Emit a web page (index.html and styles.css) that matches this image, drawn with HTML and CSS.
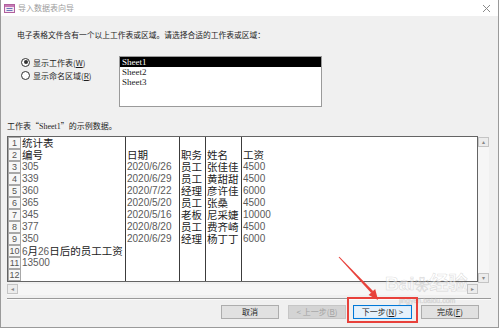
FILE: index.html
```html
<!DOCTYPE html>
<html lang="zh-CN">
<head>
    <meta charset="UTF-8">
    <meta name="viewport" content="width=device-width, initial-scale=1.0">
    <title>导入数据表向导</title>
    <link rel="stylesheet" href="styles.css">
</head>
<body>
    <div class="window">
        <div class="titlebar">
            <svg class="app-icon" width="11" height="9" viewBox="0 0 11 9">
                <rect x="0.5" y="0.5" width="10" height="8" fill="#f4e8f2" stroke="#b0609e"/>
                <rect x="1" y="1" width="9" height="2" fill="#c879b4"/>
                <line x1="2.5" y1="4.5" x2="8.5" y2="4.5" stroke="#6b78b8"/>
                <line x1="2.5" y1="6.5" x2="8.5" y2="6.5" stroke="#6b78b8"/>
            </svg>
            <span class="title">导入数据表向导</span>
            <svg class="close" width="9" height="9" viewBox="0 0 9 9">
                <path d="M1 1 L8 8 M8 1 L1 8" stroke="#8a8a8a" stroke-width="1"/>
            </svg>
        </div>

        <div class="panel">
            <p class="intro">电子表格文件含有一个以上工作表或区域。请选择合适的工作表或区域：</p>

            <div class="choose">
                <div class="radios">
                    <div class="radio-row"><span class="radio checked"></span>显示工作表(<u>W</u>)</div>
                    <div class="radio-row"><span class="radio"></span>显示命名区域(<u>R</u>)</div>
                </div>
                <div class="listbox">
                    <div class="item selected">Sheet1</div>
                    <div class="item">Sheet2</div>
                    <div class="item">Sheet3</div>
                </div>
            </div>

            <p class="caption">工作表“<span class="latin">Sheet1</span>”的示例数据。</p>

            <div class="grid-area">
                <div class="sheet">
                    <div class="col rownums">
                        <div class="num">1</div><div class="num">2</div><div class="num">3</div>
                        <div class="num">4</div><div class="num">5</div><div class="num">6</div>
                        <div class="num">7</div><div class="num">8</div><div class="num">9</div>
                        <div class="num">10</div><div class="num">11</div><div class="num">12</div>
                    </div>
                    <div class="col col-a">
                        <div class="cell">统计表</div>
                        <div class="cell">编号</div>
                        <div class="cell n">305</div>
                        <div class="cell n">339</div>
                        <div class="cell n">360</div>
                        <div class="cell n">365</div>
                        <div class="cell n">345</div>
                        <div class="cell n">377</div>
                        <div class="cell n">350</div>
                        <div class="cell"><span class="d">6</span>月<span class="d">26</span>日后的员工工资</div>
                        <div class="cell n">13500</div>
                        <div class="cell"></div>
                    </div>
                    <div class="col col-b">
                        <div class="cell"></div>
                        <div class="cell">日期</div>
                        <div class="cell n">2020/6/26</div>
                        <div class="cell n">2020/6/29</div>
                        <div class="cell n">2020/7/22</div>
                        <div class="cell n">2020/5/20</div>
                        <div class="cell n">2020/5/16</div>
                        <div class="cell n">2020/8/20</div>
                        <div class="cell n">2020/6/29</div>
                    </div>
                    <div class="col col-c">
                        <div class="cell"></div>
                        <div class="cell">职务</div>
                        <div class="cell">员工</div>
                        <div class="cell">员工</div>
                        <div class="cell">经理</div>
                        <div class="cell">员工</div>
                        <div class="cell">老板</div>
                        <div class="cell">员工</div>
                        <div class="cell">经理</div>
                    </div>
                    <div class="col col-d">
                        <div class="cell"></div>
                        <div class="cell">姓名</div>
                        <div class="cell">张佳佳</div>
                        <div class="cell">黄甜甜</div>
                        <div class="cell">彦许佳</div>
                        <div class="cell">张桑</div>
                        <div class="cell">尼采婕</div>
                        <div class="cell">费齐崎</div>
                        <div class="cell">杨丁丁</div>
                    </div>
                    <div class="col col-e">
                        <div class="cell"></div>
                        <div class="cell">工资</div>
                        <div class="cell n">4500</div>
                        <div class="cell n">4500</div>
                        <div class="cell n">6000</div>
                        <div class="cell n">4500</div>
                        <div class="cell n">10000</div>
                        <div class="cell n">4500</div>
                        <div class="cell n">6000</div>
                    </div>
                </div>
                <div class="vscroll">
                    <div class="arrow-btn">▴</div>
                    <div class="arrow-btn">▾</div>
                </div>
            </div>
            <div class="hscroll">
                <div class="arrow-btn">◂</div>
                <div class="arrow-btn">▸</div>
            </div>

            <div class="separator"></div>

            <div class="buttons">
                <button class="btn">取消</button>
                <button class="btn disabled">&lt; 上一步(<u>B</u>)</button>
                <button class="btn default">下一步(<u>N</u>) &gt;</button>
                <button class="btn">完成(<u>F</u>)</button>
            </div>
        </div>

        <!-- annotation layer from the screenshot -->
        <div class="watermark">Bai<span class="paw">❀</span>经验<small>jingyan.baidu.com</small></div>
        <div class="red-box"></div>
        <svg class="red-arrow" width="500" height="328" viewBox="0 0 500 328">
            <polygon points="337.6,257.3 338.4,256.7 372.3,291.2 370.2,293.1" fill="#e8413b"/>
            <polygon points="377,300 367.6,294.9 374.2,289" fill="#e8413b"/>
        </svg>
    </div>
</body>
</html>
```

FILE: styles.css
```css
body {
    margin: 0;
    background: #fff;
    font-family: "Noto Sans CJK SC", "Liberation Sans", sans-serif;
}
.window {
    position: relative;
    width: 499px;
    height: 328px;
    box-sizing: border-box;
    border: 1px solid #9a9a9a;
    border-top: none;
    background: #f0f0f0;
    overflow: hidden;
}
.titlebar {
    height: 16px;
    background: #fff;
    display: flex;
    align-items: center;
}
.app-icon {
    margin-left: 3px;
}
.title {
    margin-left: 3px;
    font-size: 8px;
    line-height: 10px;
    color: #9c9c9c;
}
.close {
    margin-left: auto;
    margin-right: 7px;
}
.panel {
    padding-left: 6px;
}
.intro {
    margin: 14px 0 0 10px;
    font-size: 7.75px;
    line-height: 10px;
    color: #1e1e1e;
}
.choose {
    display: flex;
    margin-top: 16px;
}
.radios {
    width: 98px;
    margin-left: 14px;
}
.radio-row {
    display: flex;
    align-items: center;
    height: 12px;
    margin-bottom: 1px;
    font-size: 8px;
    color: #1e1e1e;
}
.radio {
    width: 7px;
    height: 7px;
    border: 1px solid #333;
    border-radius: 50%;
    background: #fff;
    margin-right: 3px;
    position: relative;
}
.radio.checked::after {
    content: "";
    position: absolute;
    left: 1.5px;
    top: 1.5px;
    width: 4px;
    height: 4px;
    border-radius: 50%;
    background: #333;
}
.listbox {
    width: 203px;
    height: 51px;
    box-sizing: border-box;
    border: 1px solid #9a9a9a;
    background: #fff;
}
.item {
    height: 10px;
    line-height: 10px;
    padding-left: 2px;
    font-family: "Liberation Serif", serif;
    font-size: 9px;
    color: #222;
}
.item.selected {
    background: #000;
    color: #fff;
}
.caption {
    margin: 14px 0 0 0;
    font-size: 8px;
    line-height: 10px;
    color: #1e1e1e;
}
.latin {
    font-family: "Liberation Serif", serif;
}
.grid-area {
    display: flex;
    margin-top: 4px;
}
.sheet {
    width: 471px;
    height: 146px;
    box-sizing: border-box;
    border: 1px solid #646464;
    background: #fff;
    display: flex;
    overflow: hidden;
}
.col {
    box-sizing: border-box;
    border-right: 1px solid #3c3c3c;
}
.rownums {
    width: 13px;
    border-right: none;
}
.num {
    height: 12px;
    box-sizing: border-box;
    border: 1px solid #a8a8a8;
    background: #f7f7f7;
    font-family: "Liberation Sans", sans-serif;
    font-size: 9px;
    line-height: 10px;
    text-align: center;
    color: #555;
}
.col-a { width: 105px; }
.col-b { width: 54px; }
.col-c { width: 26px; }
.col-d { width: 36px; }
.col-e { flex: 1; border-right: none; }
.cell {
    height: 12px;
    line-height: 12px;
    padding-left: 1px;
    font-family: "Liberation Sans", "Noto Sans CJK SC", sans-serif;
    font-size: 10.5px;
    white-space: nowrap;
    color: #222;
}
.cell.n,
.cell .d {
    font-size: 10px;
    color: #5a5a5a;
}
.vscroll {
    width: 11px;
    height: 146px;
    margin-top: 1px;
    background: #f6f6f6;
    display: flex;
    flex-direction: column;
    justify-content: space-between;
}
.hscroll {
    width: 471px;
    height: 11px;
    margin-top: 1px;
    background: #f6f6f6;
    display: flex;
    justify-content: space-between;
}
.arrow-btn {
    width: 11px;
    height: 10px;
    box-sizing: border-box;
    border: 1px solid #c4c4c4;
    background: #ececec;
    font-size: 6px;
    line-height: 8px;
    text-align: center;
    color: #888;
}
.separator {
    width: 484px;
    margin-top: 3px;
    border-top: 1px solid #9a9a9a;
    border-bottom: 1px solid #fbfbfb;
}
.buttons {
    display: flex;
    margin: 5px 0 0 214px;
}
.btn {
    width: 58px;
    height: 14px;
    padding: 0;
    margin-right: 9px;
    box-sizing: border-box;
    border: 1px solid #adadad;
    background: #e1e1e1;
    font-family: "Noto Sans CJK SC", sans-serif;
    font-size: 8px;
    line-height: 12px;
    color: #1e1e1e;
}
.btn.disabled {
    margin-right: 7px;
    border-color: #c6c6c6;
    background: #d4d4d4;
    color: #a2a2a2;
}
.btn.default {
    width: 59px;
    border: 1px solid #0078d7;
    background: #e5f1fb;
    box-shadow: inset 0 0 0 1px #dcecfc;
}
.red-box {
    position: absolute;
    left: 346px;
    top: 297px;
    width: 67px;
    height: 22px;
    border: 2px solid #e8413b;
}
.red-arrow {
    position: absolute;
    left: 0;
    top: 0;
    pointer-events: none;
}
.watermark {
    position: absolute;
    left: 384px;
    top: 272px;
    font-family: "Liberation Sans", "Noto Sans CJK SC", sans-serif;
    font-size: 19px;
    font-weight: bold;
    line-height: 24px;
    color: rgba(255, 255, 255, 0.45);
    -webkit-text-stroke: 0.6px rgba(160, 160, 160, 0.35);
}
.watermark .paw {
    font-size: 15px;
}
.watermark small {
    display: block;
    font-size: 7px;
    line-height: 8px;
    font-weight: normal;
    margin-left: 14px;
}
```
